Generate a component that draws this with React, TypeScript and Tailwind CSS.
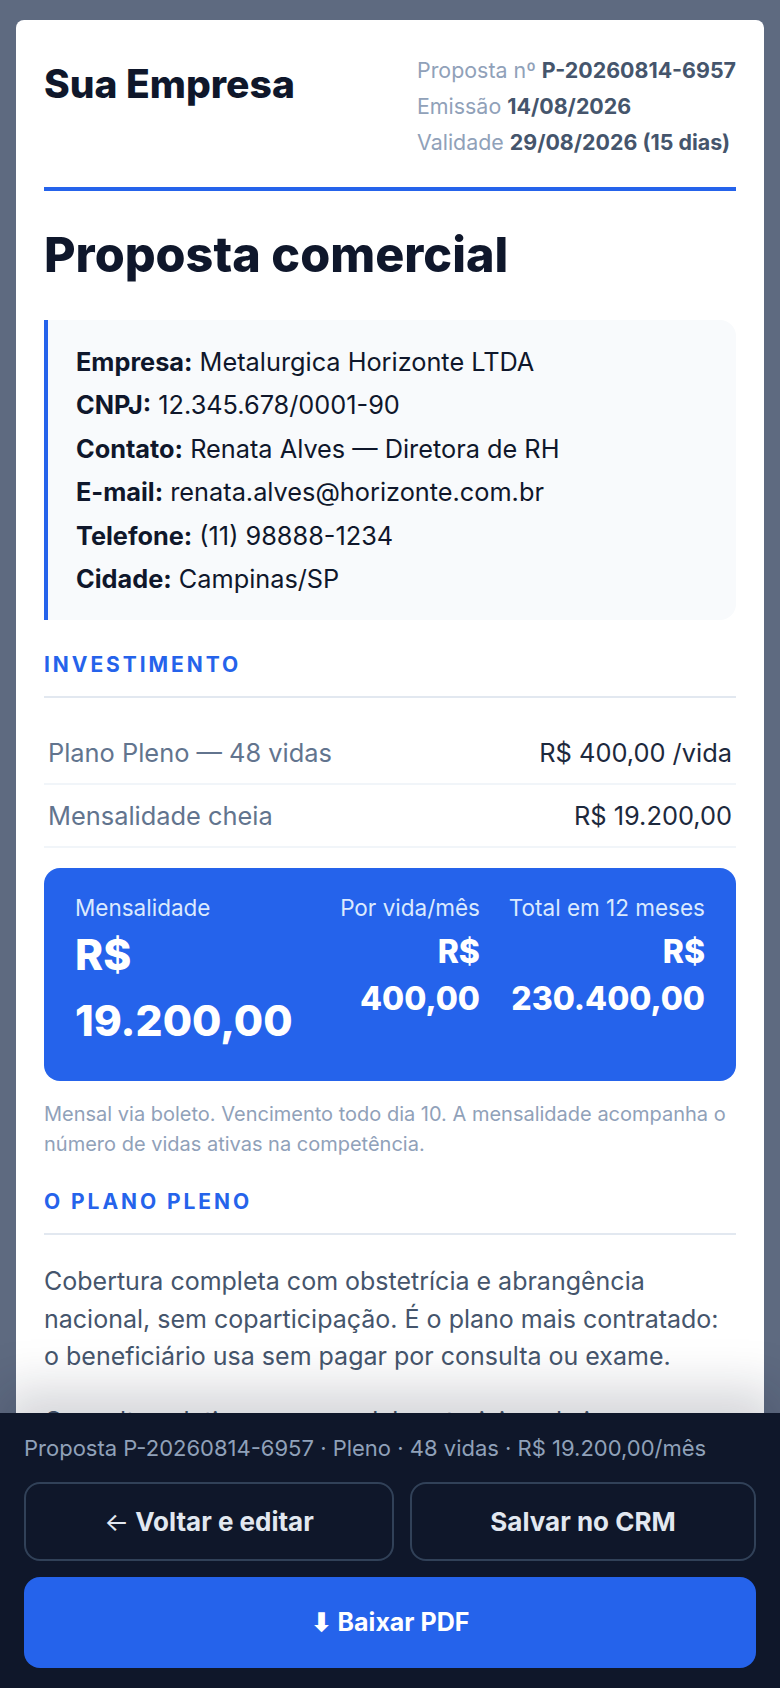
import React from 'react';

const cliente = [
  { label: 'Empresa:', value: 'Metalurgica Horizonte LTDA' },
  { label: 'CNPJ:', value: '12.345.678/0001-90' },
  { label: 'Contato:', value: 'Renata Alves — Diretora de RH' },
  { label: 'E-mail:', value: 'renata.alves@horizonte.com.br' },
  { label: 'Telefone:', value: '(11) 98888-1234' },
  { label: 'Cidade:', value: 'Campinas/SP' },
];

const linhas = [
  { label: 'Plano Pleno — 48 vidas', value: 'R$ 400,00 /vida' },
  { label: 'Mensalidade cheia', value: 'R$ 19.200,00' },
];

function SectionTitle({ children }: { children: React.ReactNode }) {
  return (
    <h2 className="border-b-2 border-slate-200 pb-4 text-[21px] font-bold uppercase leading-[30px] tracking-[0.14em] text-[#2563eb]">
      {children}
    </h2>
  );
}

export default function App() {
  return (
    <div className="relative h-[1688px] overflow-hidden bg-[#5e6a80] font-['Inter',sans-serif]">
      <div className="mx-4 mt-5 rounded-lg bg-white px-7 pb-40">
        {/* cabeçalho */}
        <header className="flex items-start justify-between border-b-4 border-[#2563eb] pb-[27px] pt-[32px]">
          <div className="text-[39px] font-extrabold leading-[64px] text-slate-900">Sua Empresa</div>
          <div className="text-[21.4px] leading-[36px] text-slate-400">
            <div>
              Proposta nº <b className="font-bold text-slate-600">P-20260814-6957</b>
            </div>
            <div>
              Emissão <b className="font-bold text-slate-600">14/08/2026</b>
            </div>
            <div>
              Validade <b className="font-bold text-slate-600">29/08/2026 (15 dias)</b>
            </div>
          </div>
        </header>

        <h1 className="mt-[35px] text-[48.5px] font-extrabold leading-[58px] text-slate-900">
          Proposta comercial
        </h1>

        {/* dados do cliente */}
        <div className="mt-[36px] rounded-r-2xl border-l-4 border-[#2563eb] bg-slate-50 py-[20px] pl-[28px] pr-6">
          {cliente.map((c) => (
            <p key={c.label} className="text-[25.3px] leading-[43.4px] text-slate-900">
              <b className="font-bold">{c.label}</b> {c.value}
            </p>
          ))}
        </div>

        <section className="mt-[30px]">
          <SectionTitle>Investimento</SectionTitle>
          <div className="mt-6">
            {linhas.map((l) => (
              <div key={l.label} className="flex justify-between border-b-2 border-slate-100 px-1 py-4 text-[25.4px] leading-[29px]">
                <span className="text-slate-500">{l.label}</span>
                <span className="text-slate-800">{l.value}</span>
              </div>
            ))}
          </div>

          <div className="mt-5 flex justify-between gap-4 rounded-2xl bg-[#2563eb] px-[31px] pb-[27px] pt-[26px] text-white">
            <div>
              <div className="text-[22.5px] leading-[28px] text-blue-100">Mensalidade</div>
              <div className="text-[42.5px] font-extrabold leading-[66px]">R$ 19.200,00</div>
            </div>
            <div className="text-right">
              <div className="text-[22.5px] leading-[28px] text-blue-100">Por vida/mês</div>
              <div className="mt-[6px] text-[32px] font-extrabold leading-[47px]">R$ 400,00</div>
            </div>
            <div className="text-right">
              <div className="text-[22.5px] leading-[28px] text-blue-100">Total em 12 meses</div>
              <div className="mt-[6px] text-[32px] font-extrabold leading-[47px]">R$ 230.400,00</div>
            </div>
          </div>

          <p className="mt-[18px] text-[20px] leading-[30px] text-slate-400">
            Mensal via boleto. Vencimento todo dia 10. A mensalidade acompanha o número de vidas ativas na competência.
          </p>
        </section>

        <section className="mt-[28px]">
          <SectionTitle>O plano Pleno</SectionTitle>
          <p className="mt-[28px] text-[25px] leading-[37.5px] text-slate-600">
            Cobertura completa com obstetrícia e abrangência nacional, sem coparticipação. É o plano mais contratado: o beneficiário usa sem pagar por consulta ou exame.
          </p>
          <p className="mt-[27px] text-[25px] leading-[37.5px] text-slate-600">
            Consultas eletivas, exames laboratoriais e de imagem, internações clínicas e cirúrgicas, com rede credenciada em todo o país.
          </p>
        </section>
      </div>

      {/* barra fixa */}
      <div className="absolute inset-x-0 bottom-0 bg-[#0f172a] px-6 pb-5 pt-[21px] shadow-[0_-24px_48px_rgba(15,23,42,0.18)]">
        <p className="text-[22px] leading-[28px] text-slate-400">
          Proposta P-20260814-6957 · Pleno · 48 vidas · R$ 19.200,00/mês
        </p>
        <div className="mt-5 flex gap-4">
          <button className="h-[79px] flex-auto rounded-2xl border-2 border-slate-700 text-[26px] font-bold text-slate-200">
            <span className="font-normal">←</span> Voltar e editar
          </button>
          <button className="h-[79px] flex-auto rounded-2xl border-2 border-slate-700 text-[26px] font-bold text-slate-200">
            Salvar no CRM
          </button>
        </div>
        <button className="mt-4 h-[91px] w-full rounded-2xl bg-[#2563eb] text-[25px] font-bold text-white">
          ⬇ Baixar PDF
        </button>
      </div>
    </div>
  );
}
